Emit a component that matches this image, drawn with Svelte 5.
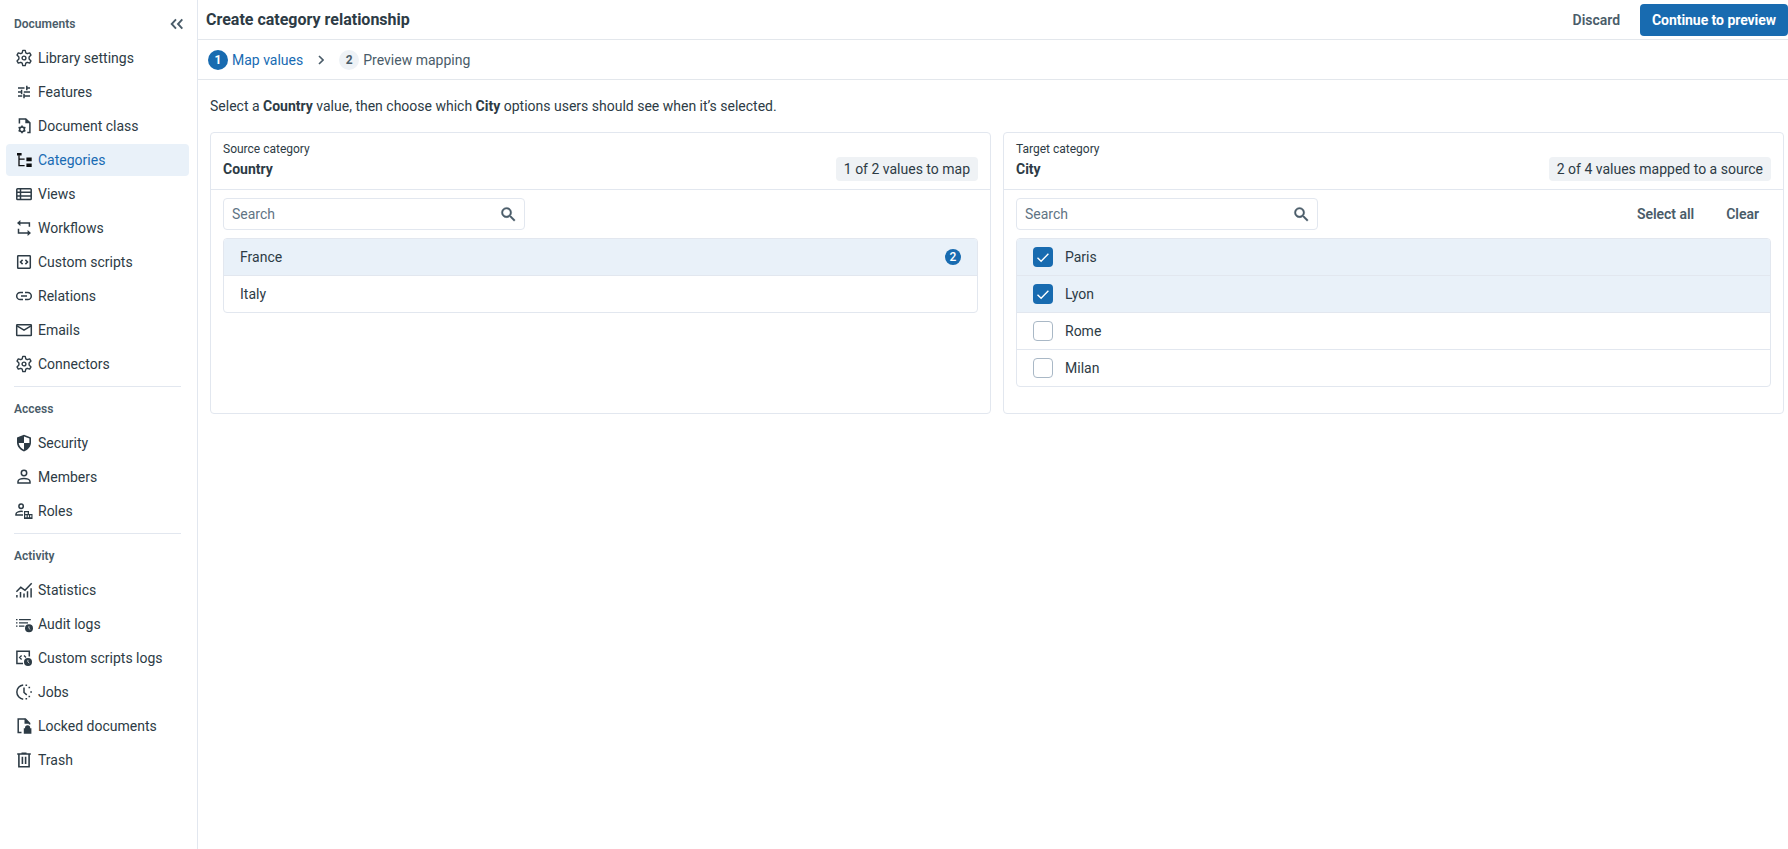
<script>
  const sections = [
    {
      title: 'Documents',
      items: [
        ['gear', 'Library settings'],
        ['tune', 'Features'],
        ['docgear', 'Document class'],
        ['tree', 'Categories'],
        ['table', 'Views'],
        ['repeat', 'Workflows'],
        ['code', 'Custom scripts'],
        ['link', 'Relations'],
        ['mail', 'Emails'],
        ['gear', 'Connectors']
      ]
    },
    {
      title: 'Access',
      items: [
        ['shield', 'Security'],
        ['person', 'Members'],
        ['roles', 'Roles']
      ]
    },
    {
      title: 'Activity',
      items: [
        ['stats', 'Statistics'],
        ['audit', 'Audit logs'],
        ['codelog', 'Custom scripts logs'],
        ['jobs', 'Jobs'],
        ['locked', 'Locked documents'],
        ['trash', 'Trash']
      ]
    }
  ];

  const active = 'Categories';
  const sources = [
    { name: 'France', count: 2, selected: true },
    { name: 'Italy', count: 0, selected: false }
  ];
  let cities = $state([
    { name: 'Paris', checked: true },
    { name: 'Lyon', checked: true },
    { name: 'Rome', checked: false },
    { name: 'Milan', checked: false }
  ]);

  function setAll(value) {
    cities.forEach((c) => (c.checked = value));
  }
</script>

{#snippet icon(name)}
  <svg class="icon" viewBox="0 0 18 18" fill="none" stroke="currentColor" stroke-width="1.5">
    {#if name === 'gear'}
      <path stroke-linejoin="round" stroke-width="1.4" d="M7.8 1.4h2.400l.6 2.500 1.400.8 2.500-.8 1.300 2.200-1.900 1.800v2.200l1.900 1.800-1.300 2.200-2.500-.8-1.400.8-.6 2.500H7.800l-.6-2.500-1.400-.8-2.500.8L2 11.900l1.900-1.800V7.900L2 6.100l1.300-2.200 2.500.8 1.400-.8z" />
      <circle cx="9" cy="9" r="1.900" stroke-width="1.400" />
    {:else if name === 'tune'}
      <path stroke-width="1.500" d="M3 5h6.500M11.500 5H15M11.800 2.800v4.400M3 9h3M6.600 6.800v4.400M8.800 9H15M3 13h4.200M9 10.800v4.400M9 13h6" />
    {:else if name === 'docgear'}
      <path d="M4.400 6.400V1.900h6.400l4.100 4v9.700h-2.600" />
      <path stroke="none" fill="currentColor" d="M10.300 1.600v4.600h4.800z" />
      <circle cx="7" cy="12.300" r="2.400" />
      <path stroke-width="1.600" d="M7 8.400v1.700M7 14.500v1.700M3.600 10.300l1.500.9M8.900 13.400l1.500.9M3.600 14.300l1.500-.9M8.900 11.200l1.500-.9" />
    {:else if name === 'tree'}
      <g class="dark">
        <path stroke="none" fill="currentColor" d="M2 2h4.600v2.400H2zM11.400 6.600h5.300v3.600h-5.300zM11.400 12.400h5.300V16h-5.300z" />
        <path stroke-width="1.300" d="M4 4.200v10.400h5.600M4 8.200h5.600" />
      </g>
    {:else if name === 'table'}
      <rect x="1.800" y="3.700" width="14.400" height="10.900" rx=".8" />
      <path d="M2 7.300h14M2 11h14M5.500 3.700v10.900" />
    {:else if name === 'repeat'}
      <path d="M4.400 4h10v3.800M3.500 9.800V14h10" />
      <path stroke="none" fill="currentColor" d="M2 4l3.400-3v6zM16 14l-3.400-3v6z" />
    {:else if name === 'code'}
      <rect x="2.700" y="2.700" width="12.600" height="12.600" rx=".7" />
      <path d="M7.600 6.900L5.500 9l2.100 2.100M10.400 6.900L12.500 9l-2.100 2.100" />
    {:else if name === 'link'}
      <path stroke-width="1.500" d="M8 5.400H5.300a3.600 3.600 0 0 0 0 7.200H8M10 5.400h2.700a3.600 3.600 0 0 1 0 7.200H10M6 9h6" />
    {:else if name === 'mail'}
      <rect x="1.700" y="3.700" width="14.600" height="10.800" rx=".5" />
      <path d="M2 4.800l7 4.400 7-4.400" />
    {:else if name === 'shield'}
      <path stroke="none" fill="currentColor" fill-rule="evenodd" d="M9 .8l7 2.700v5c0 4-2.900 7.300-7 8.900-4.100-1.600-7-4.900-7-8.900v-5zM9 2.600V9h5.400V4.600zM9 9H3.700c.3 2.900 2.400 5.300 5.300 6.700z" />
    {:else if name === 'person'}
      <circle cx="9" cy="5" r="2.700" stroke-width="1.500" />
      <path stroke-width="1.500" d="M3 15v-1.600c0-2 3.500-3 6-3s6 1 6 3V15z" />
    {:else if name === 'roles'}
      <circle cx="6.100" cy="4.300" r="2.200" />
      <path d="M8 12.900H1v-1c0-1.700 3.600-2.900 6.800-2.400" />
      <path stroke="none" fill="currentColor" fill-rule="evenodd" d="M9 9h5v3h3.500v5H9zM10.200 10.200v1.900h2.500v-1.900zM10.200 13.300v1.900h1.400v-1.900zM12.800 13.300v1.900H14v-1.900zM15.100 13.300v1.900h1.300v-1.900z" />
    {:else if name === 'stats'}
      <path stroke-width="1.500" d="M1.400 10.800l4.400-4.500 4.200 3 6.700-7" />
      <path d="M1.900 14v2.500M5.500 11v5.500M9 12.500v4M12.500 10.200v6.300M16.100 7.300v9.200" />
    {:else if name === 'audit'}
      <path stroke-width="1.300" d="M1 4.700h1.500M4 4.700h11.800M1 7.900h1.500M4 7.900h9M1 11.100h1.500M4 11.100h5.400" />
      <circle cx="14" cy="13.200" r="4" fill="currentColor" stroke="none" />
      <path class="hand" d="M13.900 11.200v2.100l1.400 1.200" />
    {:else if name === 'codelog'}
      <path d="M14.300 7.500V2.300H1.900v12.200H8" />
      <path stroke-width="1.300" d="M6.600 6.500L4.600 8.500l2 2M9 6.500l2 2" />
      <circle cx="13" cy="12.900" r="4" fill="currentColor" stroke="none" />
      <path class="hand" d="M12.900 10.900v2.100l1.400 1.200" />
    {:else if name === 'jobs'}
      <path d="M8.200 1.900a7.200 7.200 0 0 0 0 14.300" />
      <path d="M9 4.500v5l2.800 2.400" />
      <path stroke="none" fill="currentColor" d="M10.500 1.400h1.600V3h-1.600zM13.500 3.700h1.600v1.600h-1.600zM15.300 8.200h1.600v1.600h-1.600zM13.500 12.700h1.600v1.600h-1.600zM10.500 15h1.600v1.600h-1.600z" />
    {:else if name === 'locked'}
      <path d="M6.500 15.600H3.200V2h7.200l4.200 4.200v1.300" />
      <path stroke="none" fill="currentColor" d="M9.500 1.500v5.200h5.500zM8.800 11.300h1.200v-.4a2.600 2.600 0 0 1 5.200 0v.4h1.200v5.500H8.800z" />
    {:else if name === 'trash'}
      <path stroke-width="1.500" d="M2.200 3h13.600M6.500 2.200h5" />
      <path stroke-width="1.600" d="M3.900 3v12.700h10.200V3M7.400 5.700v7.300M10.600 5.700v7.300" />
    {/if}
  </svg>
{/snippet}

{#snippet search()}
  <label class="search">
    <input type="text" placeholder="Search" />
    <svg viewBox="0 0 24 24" fill="currentColor" stroke="currentColor" stroke-width=".5"><path d="M15.500 14h-.79l-.28-.27A6.471 6.471 0 0 0 16 9.500 6.500 6.500 0 1 0 9.500 16c1.610 0 3.090-.59 4.230-1.570l.27.28v.79l5 4.990L20.490 19l-4.990-5zm-6 0C7.010 14 5 11.990 5 9.500S7.010 5 9.500 5 14 7.010 14 9.500 11.990 14 9.500 14z" /></svg>
  </label>
{/snippet}

<div class="app">
  <nav class="sidebar">
    {#each sections as section, i}
      <section>
        <header>
          <h2>{section.title}</h2>
          {#if i === 0}
            <svg class="collapse" viewBox="0 0 14 12" fill="none" stroke="currentColor" stroke-width="1.900"><path d="M6 1.300L1.700 6 6 10.700M12.300 1.300L8 6l4.300 4.700" /></svg>
          {/if}
        </header>
        <ul>
          {#each section.items as [glyph, label]}
            <li class:active={label === active}>{@render icon(glyph)}<span>{label}</span></li>
          {/each}
        </ul>
      </section>
    {/each}
  </nav>

  <main>
    <div class="topbar">
      <h1>Create category relationship</h1>
      <button class="text">Discard</button>
      <button class="primary">Continue to preview</button>
    </div>

    <div class="steps">
      <span class="num current">1</span>
      <span class="label current">Map values</span>
      <svg class="chevron" viewBox="0 0 6 10" fill="none" stroke="currentColor" stroke-width="1.600"><path d="M1 1l4 4-4 4" /></svg>
      <span class="num">2</span>
      <span class="label">Preview mapping</span>
    </div>

    <p class="hint">Select a <b>Country</b> value, then choose which <b>City</b> options users should see when it’s selected.</p>

    <div class="cards">
      <article class="card">
        <div class="head">
          <div><small>Source category</small><strong>Country</strong></div>
          <span class="tag">1 of 2 values to map</span>
        </div>
        <div class="body">
          <div class="tools">{@render search()}</div>
          <ul class="list">
            {#each sources as s}
              <li class:selected={s.selected}>
                <span class="name">{s.name}</span>
                {#if s.count}<span class="count">{s.count}</span>{/if}
              </li>
            {/each}
          </ul>
        </div>
      </article>

      <article class="card">
        <div class="head">
          <div><small>Target category</small><strong>City</strong></div>
          <span class="tag">2 of 4 values mapped to a source</span>
        </div>
        <div class="body">
          <div class="tools">
            {@render search()}
            <div class="actions">
              <button class="text" onclick={() => setAll(true)}>Select all</button>
              <button class="text" onclick={() => setAll(false)}>Clear</button>
            </div>
          </div>
          <ul class="list">
            {#each cities as c}
              <li class:selected={c.checked}>
                <span class="box" class:checked={c.checked}>
                  {#if c.checked}
                    <svg viewBox="0 0 20 20" fill="none" stroke="#fff" stroke-width="1.400"><path d="M4.500 10.700l3.600 3.500 7.300-7.400" /></svg>
                  {/if}
                </span>
                <span class="name">{c.name}</span>
              </li>
            {/each}
          </ul>
        </div>
      </article>
    </div>
  </main>
</div>

<style>
  :global(body) {
    background: #fff;
  }
  .app {
    display: flex;
    height: 849px;
    overflow: hidden;
    font: 400 14px/20px Roboto, sans-serif;
    color: #2d3b45;
  }
  ul, h1, h2, p {
    margin: 0;
    padding: 0;
    list-style: none;
  }
  .sidebar {
    box-sizing: border-box;
    width: 198px;
    flex: none;
    border-right: 1px solid #e2e7ef;
    padding: 2px 8px 0 6px;
  }
  .sidebar section + section {
    margin-top: 6px;
  }
  .sidebar section + section::before {
    content: '';
    display: block;
    height: 1px;
    margin: 0 8px;
    background: #e2e7ef;
  }
  .sidebar header {
    height: 40px;
    box-sizing: border-box;
    padding: 4px 5px 0 8px;
    display: flex;
    align-items: center;
    justify-content: space-between;
  }
  h2 {
    font-size: 12px;
    line-height: 16px;
    font-weight: 600;
    color: #4a5c69;
  }
  .collapse {
    width: 14px;
    height: 12px;
    color: #4a5c69;
  }
  .sidebar ul {
    display: grid;
    gap: 2px;
  }
  .sidebar li {
    display: flex;
    align-items: center;
    gap: 5px;
    height: 32px;
    box-sizing: border-box;
    padding-left: 9px;
    border-radius: 4px;
  }
  .sidebar li.active {
    background: #e9f1f9;
  }
  .sidebar li.active span {
    color: #186bb3;
  }
  .icon {
    width: 18px;
    height: 18px;
    flex: none;
  }
  .dark {
    color: #0b0d0f;
  }
  .hand {
    stroke: #fff;
    stroke-width: 0.7;
  }
  main {
    flex: 1;
    min-width: 0;
  }
  .topbar {
    display: flex;
    align-items: center;
    gap: 8px;
    height: 39px;
    padding-left: 8px;
    border-bottom: 1px solid #e3e7ec;
  }
  h1 {
    flex: 1;
    font-size: 16px;
    line-height: 24px;
    font-weight: 700;
  }
  button {
    height: 32px;
    border: 0;
    border-radius: 4px;
    padding: 0 12px;
    font: 500 14px/20px Roboto, sans-serif;
    background: none;
    color: #4a5c69;
  }
  .actions .text,
  .topbar .text {
    font-weight: 600;
    letter-spacing: -0.02px;
  }
  .primary {
    width: 148px;
    padding: 0;
    background: #186bb0;
    color: #fff;
    font-weight: 700;
    letter-spacing: -0.05px;
    white-space: nowrap;
  }
  .steps {
    display: flex;
    align-items: center;
    height: 39px;
    padding-left: 10px;
    border-bottom: 1px solid #e3e7ec;
  }
  .num {
    width: 20px;
    height: 20px;
    border-radius: 50%;
    background: #eef2f6;
    color: #4a5c69;
    font-size: 12px;
    font-weight: 700;
    text-align: center;
  }
  .num.current {
    background: #186bb0;
    color: #fff;
  }
  .label {
    margin-left: 4px;
    color: #4a5c69;
  }
  .label.current {
    color: #186bb3;
  }
  .chevron {
    width: 6px;
    height: 10px;
    margin: 0 15px;
    color: #4a5c69;
  }
  .hint {
    padding: 16px 12px;
  }
  b, strong {
    font-weight: 700;
  }
  .cards {
    display: grid;
    grid-template-columns: 1fr 1fr;
    gap: 12px;
    padding: 0 4px 0 12px;
  }
  .card {
    box-sizing: border-box;
    height: 282px;
    border: 1px solid #e2e7ef;
    border-radius: 4px;
  }
  .head {
    display: flex;
    justify-content: space-between;
    align-items: flex-end;
    height: 48px;
    padding: 0 12px 8px;
    border-bottom: 1px solid #e2e7ef;
  }
  small {
    display: block;
    font-size: 12px;
    line-height: 16px;
  }
  strong {
    display: block;
    line-height: 20px;
    padding: 2px 0;
  }
  .tag {
    height: 24px;
    line-height: 24px;
    padding: 0 8px;
    border-radius: 4px;
    background: #eff2f5;
  }
  .body {
    padding: 8px 12px;
  }
  .tools {
    display: flex;
    justify-content: space-between;
    margin-bottom: 8px;
  }
  .actions {
    display: flex;
    gap: 8px;
  }
  .search {
    box-sizing: border-box;
    display: flex;
    align-items: center;
    width: 302px;
    height: 32px;
    padding: 0 6px 0 8px;
    border: 1px solid #e2e7ef;
    border-radius: 4px;
  }
  input {
    flex: 1;
    min-width: 0;
    border: 0;
    padding: 0;
    outline: 0;
    background: none;
    font: inherit;
  }
  input::placeholder {
    color: #5f7484;
    opacity: 1;
  }
  .search svg {
    width: 19px;
    height: 19px;
    color: #4a5c69;
  }
  .list {
    border: 1px solid #e2e7ef;
    border-radius: 4px;
    overflow: hidden;
  }
  .list li {
    display: flex;
    align-items: center;
    height: 36px;
    padding: 0 16px;
  }
  .list li + li {
    border-top: 1px solid #e2e7ef;
  }
  .list li.selected {
    background: #e9f1f9;
  }
  .name {
    flex: 1;
  }
  .count {
    width: 16px;
    height: 16px;
    border-radius: 50%;
    background: #186bb0;
    color: #fff;
    font-size: 12px;
    line-height: 16px;
    font-weight: 500;
    text-align: center;
  }
  .box {
    box-sizing: border-box;
    width: 20px;
    height: 20px;
    margin-right: 12px;
    border: 1px solid #a9b8c6;
    border-radius: 4px;
    background: #fff;
  }
  .box.checked {
    border: 0;
    background: #186bb0;
  }
  .box svg {
    display: block;
    width: 20px;
    height: 20px;
  }
</style>
